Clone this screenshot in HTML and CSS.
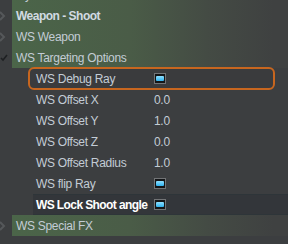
FILE: index.html
```html
<!DOCTYPE html>
<html lang="en">
<head>
<meta charset="UTF-8">
<title>Weapon Options</title>
<link rel="stylesheet" href="styles.css">
</head>
<body>

<div class="tree">
  <div class="row group">
    <span class="gut"></span>
    <span class="name">Gy</span>
  </div>
  <div class="row group">
    <span class="gut"><svg width="8" height="10" viewBox="0 0 8 10"><polyline points="0,1 4,5 0,9" fill="none" stroke="#55585a" stroke-width="2"/></svg></span>
    <span class="name bold">Weapon - Shoot</span>
  </div>
  <div class="row group">
    <span class="gut"><svg width="8" height="10" viewBox="0 0 8 10"><polyline points="0,1 4,5 0,9" fill="none" stroke="#55585a" stroke-width="2"/></svg></span>
    <span class="name">WS Weapon</span>
  </div>
  <div class="row group">
    <span class="gut"><svg width="8" height="8" viewBox="0 0 8 8"><polyline points="1,4 3,6 7,1" fill="none" stroke="#1e2022" stroke-width="1.6"/></svg></span>
    <span class="name">WS Targeting Options</span>
  </div>

  <div class="row child selected">
    <span class="label">WS Debug Ray</span>
    <span class="check"><i></i></span>
  </div>
  <div class="row child">
    <span class="label">WS Offset X</span>
    <span class="value">0.0</span>
  </div>
  <div class="row child">
    <span class="label">WS Offset Y</span>
    <span class="value">1.0</span>
  </div>
  <div class="row child">
    <span class="label">WS Offset Z</span>
    <span class="value">0.0</span>
  </div>
  <div class="row child">
    <span class="label">WS Offset Radius</span>
    <span class="value">1.0</span>
  </div>
  <div class="row child">
    <span class="label">WS flip Ray</span>
    <span class="check"><i></i></span>
  </div>
  <div class="row child hover">
    <span class="label">WS Lock Shoot angle</span>
    <span class="check"><i></i></span>
  </div>

  <div class="row group">
    <span class="gut"><svg width="8" height="10" viewBox="0 0 8 10"><polyline points="0,1 4,5 0,9" fill="none" stroke="#55585a" stroke-width="2"/></svg></span>
    <span class="name">WS Special FX</span>
  </div>
</div>

</body>
</html>
```

FILE: styles.css
```css
body { margin: 0; background: #3c3e40; font-family: "Liberation Sans", Arial, sans-serif; font-size: 12px; letter-spacing: -0.3px; color: #c3ccd5; overflow: hidden; }
.tree { display: flex; flex-direction: column; margin-top: -16px; }
.row { display: flex; align-items: center; height: 21px; box-sizing: border-box; }
.group { background: linear-gradient(to right, #3c3e40 0, #3c3e40 12px, #4b6549 12px, #4a5c47 45%, #444b44 72%, #3f4141 95%); }
.gut { width: 12px; display: flex; align-items: center; }
.name { padding-left: 4px; white-space: nowrap; }
.bold { font-weight: bold; letter-spacing: -0.5px; color: #d2dae2; }
.child { padding-left: 36px; }
.label { width: 118px; white-space: nowrap; }
.value { color: #c3ccd5; }
.selected { height: 23px; margin: -1px 13px -1px 28px; padding-left: 6px; border: 2px solid #c7661f; border-radius: 6px; background: #3a3b3d; }
.hover { margin-left: 33px; padding-left: 3px; background: #33363a; border-top: 1px solid #2e3539; border-bottom: 1px solid #2e3539; }
.hover .label { font-weight: bold; letter-spacing: -0.6px; color: #ffffff; }
.check { width: 12px; height: 11px; box-sizing: border-box; border: 1px solid #727476; background: #141618; display: flex; align-items: center; justify-content: center; }
.check i { display: block; width: 8px; height: 5px; border-radius: 1px; background: linear-gradient(#8fe0ff, #2fb2ee); }
```
